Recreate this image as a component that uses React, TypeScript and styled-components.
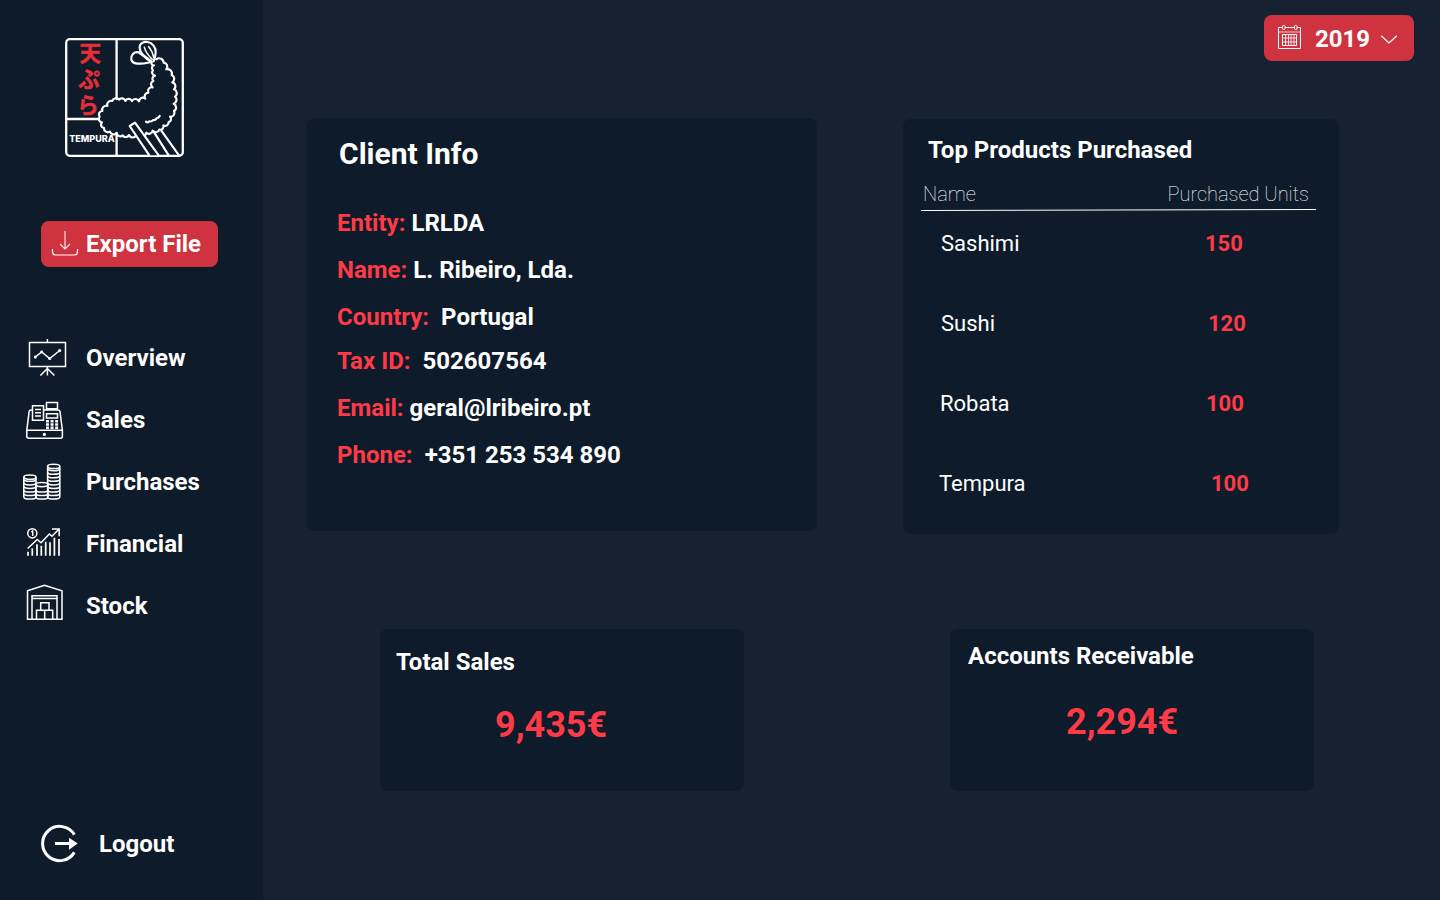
import React from "react";
import styled, { createGlobalStyle } from "styled-components";

const Global = createGlobalStyle`
  * { box-sizing: border-box; }
  body { margin: 0; background: #162232; font-family: Roboto, "Noto Sans CJK JP", sans-serif; color: #fff; }
`;

const Page = styled.div`
  display: flex;
  width: 1440px;
  height: 900px;
  overflow: hidden;
  background: #162232;
`;

const Sidebar = styled.aside`
  width: 263px;
  height: 900px;
  flex: none;
  display: flex;
  flex-direction: column;
  align-items: flex-start;
  padding-top: 38px;
  background: #0e1b2a;
`;

const Logo = styled.svg`
  display: block;
  flex: none;
  margin-left: 65px;
`;

const ExportButton = styled.button`
  display: flex;
  align-items: center;
  gap: 7px;
  width: 177px;
  height: 46px;
  margin: 64px 0 0 41px;
  padding: 0 0 0 10px;
  border: 0;
  border-radius: 8px;
  background: #cf3340;
  color: #fff;
  font: 700 24px/28px Roboto, sans-serif;
  white-space: nowrap;
`;

const Menu = styled.nav`
  margin-top: 60px;
`;

const MenuItem = styled.a`
  display: flex;
  align-items: center;
  height: 62px;
  padding-left: 20px;
  font-size: 24px;
  font-weight: 700;
  line-height: 28px;
`;

const MenuIcon = styled.svg`
  width: 48px;
  height: 48px;
  margin-right: 18px;
  fill: none;
  stroke: #fff;
  stroke-width: 1.5;
`;

const Logout = styled.a`
  display: flex;
  align-items: center;
  gap: 19px;
  height: 40px;
  margin: 187px 0 0 40px;
  font-size: 24px;
  font-weight: 700;
`;

const Main = styled.main`
  flex: 1;
  display: flex;
  flex-direction: column;
`;

const TopBar = styled.header`
  display: flex;
  justify-content: flex-end;
  padding: 15px 26px 0 0;
`;

const YearSelect = styled.button`
  display: flex;
  align-items: center;
  width: 150px;
  height: 46px;
  padding: 0 0 0 13px;
  border: 0;
  border-radius: 8px;
  background: #cf3340;
  color: #fff;
  font: 700 24px/28px Roboto, sans-serif;
`;

const YearLabel = styled.span`
  margin: 2px 10px 0 12px;
`;

const Row = styled.section<{ $top: number; $left: number; $gap: number }>`
  display: flex;
  align-items: flex-start;
  gap: ${(p) => p.$gap}px;
  margin: ${(p) => p.$top}px 0 0 ${(p) => p.$left}px;
`;

const Card = styled.article<{ $w: number; $h: number; $drop?: number }>`
  width: ${(p) => p.$w}px;
  height: ${(p) => p.$h}px;
  margin-top: ${(p) => p.$drop ?? 0}px;
  border-radius: 8px;
  background: #0e1b2a;
`;

const CardTitle = styled.h2<{ $size?: number; $top: number; $left: number }>`
  margin: 0;
  padding: ${(p) => p.$top}px 0 0 ${(p) => p.$left}px;
  font-size: ${(p) => p.$size ?? 24}px;
  font-weight: 700;
  line-height: 28px;
`;

const Details = styled.dl`
  margin: 41px 0 0 30px;
`;

const Detail = styled.div<{ $h: number; $gap: number }>`
  display: flex;
  gap: ${(p) => p.$gap}px;
  height: ${(p) => p.$h}px;
  font-size: 24px;
  font-weight: 700;
  line-height: 28px;
  white-space: nowrap;
`;

const Term = styled.dt`
  color: #ff3a47;
`;

const Value = styled.dd`
  margin: 0;
`;

const TableHead = styled.div`
  display: flex;
  justify-content: space-between;
  margin: 18px 30px 0 20px;
  font-size: 20px;
  font-weight: 100;
  line-height: 24px;
  color: #fff;
`;

const Rule = styled.svg`
  display: block;
  margin: 2px 0 0 18px;
`;

const ProductList = styled.div`
  padding-top: 19px;
`;

const ProductRow = styled.div<{ $left: number; $units: number }>`
  display: grid;
  grid-template-columns: ${(p) => p.$units - p.$left}px auto;
  height: 80px;
  padding-left: ${(p) => p.$left}px;
  font-size: 22px;
  line-height: 26px;
`;

const Units = styled.span`
  color: #ff3a47;
  font-weight: 700;
`;

const Amount = styled.p<{ $top: number; $left: number }>`
  margin: ${(p) => p.$top}px 0 0 ${(p) => p.$left}px;
  color: #ff3a47;
  font-size: 36px;
  font-weight: 700;
  line-height: 42px;
`;

const details = [
  { term: "Entity:", value: "LRLDA", h: 47, gap: 6 },
  { term: "Name:", value: "L. Ribeiro, Lda.", h: 47, gap: 6 },
  { term: "Country:", value: "Portugal", h: 44, gap: 12 },
  { term: "Tax ID:", value: "502607564", h: 47, gap: 12 },
  { term: "Email:", value: "geral@lribeiro.pt", h: 47, gap: 6 },
  { term: "Phone:", value: "+351 253 534 890", h: 47, gap: 12 },
];

const products = [
  { name: "Sashimi", units: 150, left: 38, at: 302 },
  { name: "Sushi", units: 120, left: 38, at: 305 },
  { name: "Robata", units: 100, left: 37, at: 303 },
  { name: "Tempura", units: 100, left: 36, at: 308 },
];

/* Joins the points with small outward arcs, for the crust of the shrimp. */
const scallop = (points: number[][]) =>
  points
    .map(([x, y], i) => {
      if (i === 0) return `M${x} ${y}`;
      const [px, py] = points[i - 1];
      const r = (Math.hypot(x - px, y - py) * 0.56).toFixed(1);
      return `A${r} ${r} 0 0 1 ${x} ${y}`;
    })
    .join("");

const crust = scallop([
  [304, 88], [326, 98], [334, 118], [350, 135], [352, 157], [357, 178], [360, 200],
  [356, 221], [357, 243], [345, 260], [341, 276], [325, 286], [313, 299], [293, 302], [274, 308],
  [243, 317], [222, 315], [203, 316], [185, 309], [165, 305], [147, 294],
  [141, 277], [134, 260], [142, 243], [157, 228], [172, 213], [192, 209], [211, 213],
  [231, 213], [252, 214], [271, 206], [280, 188], [293, 172], [295, 153], [300, 137],
  [294, 121], [297, 106], [290, 95],
]);

const Brand = () => (
  <Logo width="119" height="119" viewBox="0 0 119 119" fill="none" stroke="#fff" strokeWidth="2.3" strokeLinejoin="round" strokeLinecap="round">
    <rect x="1.2" y="1.2" width="116.6" height="116.6" rx="3.5" />
    <path d="M51.600 1v60M51.600 95v23M1 81h33" />
    <g fill="#e62e39" stroke="#e62e39" strokeWidth=".5" fontFamily="Noto Sans CJK JP, sans-serif" fontWeight="700" fontSize="21.500" textAnchor="middle">
      <text x="25.300" y="23.300">天</text>
      <text x="24" y="48.800">ぷ</text>
      <text x="23" y="75.300">ら</text>
    </g>
    <text x="4.200" y="103.800" fill="#fff" stroke="none" fontFamily="Inter, sans-serif" fontWeight="800" fontSize="9.200" textLength="45.500" lengthAdjust="spacingAndGlyphs">TEMPURA</text>
    <g transform="scale(.33333) translate(-30 -24)" strokeWidth="6.500">
      <path d={crust} />
      <path d="M252 67C236 64 227 76 229 88C231 101 245 101 257 101C270 101 280 97 290 96C272 86 254 68 254 52C254 40 266 34 278 36C292 38 303 52 302 67C302 78 299 86 296 94" />
      <path d="M250 68L284 92M262 72L288 92M268 52Q273 70 292 88M281 50Q292 62 296 82" strokeWidth="4.500" />
      <path d="M273 275q5 4 10-1q6 2 12-4q7 1 11-6q5 0 8-6" />
      <path d="M283 376L224 288L240 278L311 376z" fill="#0e1b2a" stroke="none" />
      <path d="M283 376L224 288L240 278L311 376M296 305L341 376M319 302L372 376" />
    </g>
  </Logo>
);

const DownloadIcon = () => (
  <svg width="28" height="28" viewBox="0 0 28 28" fill="none" stroke="#fff" strokeWidth="1.2">
    <path d="M14 1v18M9 14l5 5l5-5" opacity=".85" />
    <path d="M1.500 19v3q0 3 3 3h19q3 0 3-3v-3" />
  </svg>
);

const OverviewIcon = () => (
  <MenuIcon viewBox="0 0 48 48">
    <path d="M9.500 8.500h36v24h-36zM27.400 5v3.500M27.400 33v8.500M27.400 34.500l-7 7M27.400 34.500l7 7M15.300 23l6.400-5l8 6.500l10-8" />
    <g fill="#fff" stroke="none"><circle cx="15.300" cy="23" r="1.500" /><circle cx="21.700" cy="18" r="1.400" /><circle cx="29.700" cy="24.500" r="1.500" /><circle cx="39.600" cy="16.600" r="1.600" /></g>
  </MenuIcon>
);

const SalesIcon = () => (
  <MenuIcon viewBox="0 0 48 48">
    <path d="M6.800 34.300L9.100 15.600Q9.400 14 11 14h1.300M23.700 14h14.300q1.700 0 2 1.600L42.400 34.300M6.800 34.300h35.600v6q0 2-2 2H8.800q-2 0-2-2zM12.500 9.700h11v14.500h-11zM15 13.500h6M15 16.800h6M15 20h6M26.500 6.500h11v6.300h-11zM30 13v1M34 13v1M26.500 17.700h11v4.300h-11z" />
    <path d="M26 25.200h12.100M26 28.500h12.100M26 31.800h12.100" strokeWidth="2.400" strokeDasharray="2.900 1.700" />
    <circle cx="24.400" cy="38.400" r="1.600" fill="#fff" stroke="none" />
  </MenuIcon>
);

const stack = (x: number, top: number) => {
  const rings: React.ReactNode[] = [];
  for (let y = 39; y > top + 2; y -= 3.55) {
    rings.push(<path key={y} d={`M${x} ${y}q0 2.100 6.100 2.100t6.100-2.100`} />);
  }
  return (
    <g>
      <ellipse cx={x + 6.1} cy={top} rx="6.1" ry="2.1" />
      <path d={`M${x} ${top}V39M${x + 12.2} ${top}V39`} />
      {rings}
    </g>
  );
};

const PurchasesIcon = () => (
  <MenuIcon viewBox="0 0 48 48">
    {stack(3.8, 19.2)}
    {stack(15.8, 26.6)}
    {stack(27.6, 8.4)}
  </MenuIcon>
);

const FinancialIcon = () => (
  <MenuIcon viewBox="0 0 48 48">
    <circle cx="12.300" cy="13.300" r="4.600" />
    <path d="M11.300 12l1.400-1v5M7.700 28.500l9.600-9l3.700 3.300l8.300-8.800l2.700 2.300l7-7.300M32 9h7.200v7.300" />
    <path d="M8 31.700v4M12.300 28.300v7.400M17 24.300v11.400M21.300 25.700v10M25.700 21.700v14M30 22.300v13.400M34.400 17.700v18M39 19v16.700" strokeWidth="1.700" />
  </MenuIcon>
);

const StockIcon = () => (
  <MenuIcon viewBox="0 0 48 48">
    <path d="M7.500 8.700l17-5.500l17.500 5.500v28.600h-5V13.700H12V37.300H7.500zM12 16.500h25M16.500 37.300v-9h16.200v9zM24.700 28.300v9M20.700 28.300v-7.500h8.300v7.500M12 37.300h25" />
  </MenuIcon>
);

const LogoutIcon = () => (
  <svg width="40" height="40" viewBox="0 0 40 40" fill="none" stroke="#fff" strokeWidth="3">
    <path d="M34.300 10.600A17.100 17.100 0 1 0 34.300 28.400" />
    <path d="M15 19.500h16" />
    <path d="M29 13.700l8.700 5.800l-8.700 6.200z" fill="#fff" stroke="none" />
  </svg>
);

const CalendarIcon = () => (
  <svg width="26" height="26" viewBox="0 0 26 26" fill="none" stroke="#fff" strokeWidth="1">
    <path d="M5.500 2.500H1.500v21h22v-21H20M8 2.500h9.500" />
    <path d="M1.500 7h22" opacity=".7" />
    <rect x="5.500" y=".5" width="2.500" height="4" rx="1" /><rect x="17.500" y=".5" width="2.500" height="4" rx="1" />
    <path d="M5.500 9.500h14v11h-14z" />
    <path d="M8.500 9.500v11M11.500 9.500v11M14 9.500v11M17 9.500v11M5.500 13h14M5.500 17h14" opacity=".8" />
  </svg>
);

const menu = [
  { label: "Overview", Icon: OverviewIcon },
  { label: "Sales", Icon: SalesIcon },
  { label: "Purchases", Icon: PurchasesIcon },
  { label: "Financial", Icon: FinancialIcon },
  { label: "Stock", Icon: StockIcon },
];

export default function App() {
  return (
    <>
      <Global />
      <Page>
        <Sidebar>
          <Brand />
          <ExportButton><DownloadIcon />Export File</ExportButton>
          <Menu>
            {menu.map(({ label, Icon }) => <MenuItem key={label}><Icon />{label}</MenuItem>)}
          </Menu>
          <Logout><LogoutIcon />Logout</Logout>
        </Sidebar>
        <Main>
          <TopBar>
            <YearSelect>
              <CalendarIcon />
              <YearLabel>2019</YearLabel>
              <svg width="18" height="12" viewBox="0 0 18 12" fill="none" stroke="#fff" strokeWidth="1.200"><path d="M1.200 3.800l7.800 7.200l7.800-7.200" /></svg>
            </YearSelect>
          </TopBar>
          <Row $top={57} $left={44} $gap={86}>
            <Card $w={510} $h={413}>
              <CardTitle $size={30} $top={22} $left={32}>Client Info</CardTitle>
              <Details>
                {details.map((d) => (
                  <Detail key={d.term} $h={d.h} $gap={d.gap}><Term>{d.term}</Term><Value>{d.value}</Value></Detail>
                ))}
              </Details>
            </Card>
            <Card $w={436} $h={415} $drop={1}>
              <CardTitle $top={17} $left={25}>Top Products Purchased</CardTitle>
              <TableHead><span>Name</span><span>Purchased Units</span></TableHead>
              <Rule width="395" height="4" viewBox="0 0 395 4"><path d="M0 2.500L395 1.500" stroke="#fff" /></Rule>
              <ProductList>
                {products.map((p) => (
                  <ProductRow key={p.name} $left={p.left} $units={p.at}><span>{p.name}</span><Units>{p.units}</Units></ProductRow>
                ))}
              </ProductList>
            </Card>
          </Row>
          <Row $top={95} $left={117} $gap={206}>
            <Card $w={364} $h={162}>
              <CardTitle $top={19} $left={16}>Total Sales</CardTitle>
              <Amount $top={28} $left={115}>9,435€</Amount>
            </Card>
            <Card $w={364} $h={162}>
              <CardTitle $top={13} $left={18}>Accounts Receivable</CardTitle>
              <Amount $top={31} $left={116}>2,294€</Amount>
            </Card>
          </Row>
        </Main>
      </Page>
    </>
  );
}
